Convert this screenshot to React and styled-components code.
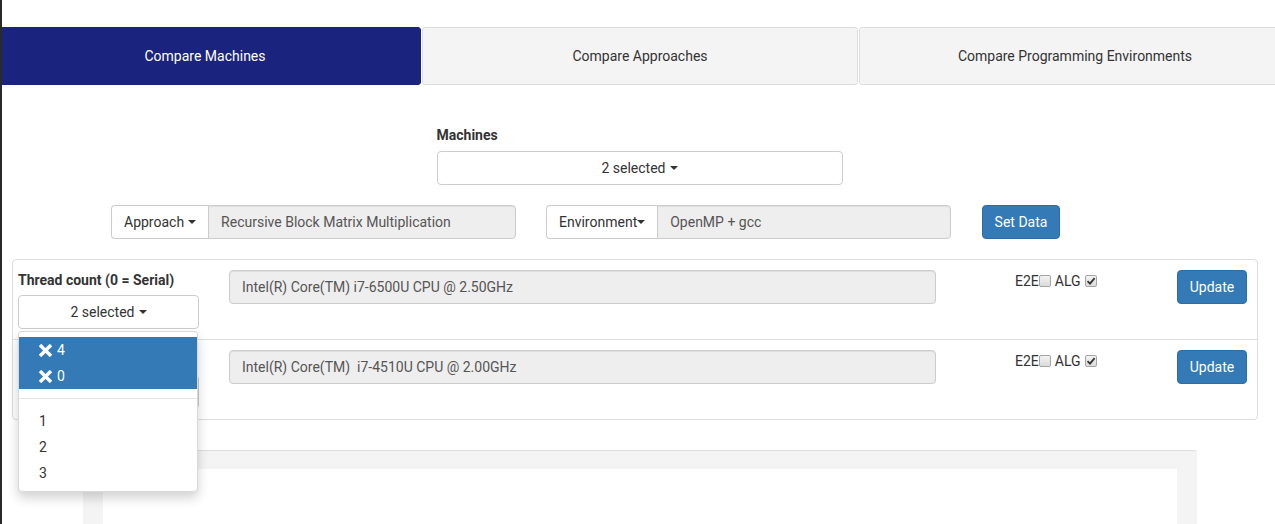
import React from "react";
import styled, { createGlobalStyle } from "styled-components";

const GlobalStyle = createGlobalStyle`
  * { box-sizing: border-box; }
  html, body { margin: 0; padding: 0; height: 100%; }
  body {
    border-left: 2px solid #2a2a2a;
    font-family: Roboto, "Liberation Sans", Arial, sans-serif;
    font-size: 14px;
    line-height: 20px;
    color: #333;
    background: #fff;
    overflow: hidden;
  }
`;

const Page = styled.div`
  padding-top: 27px;
  overflow: hidden;
  height: 100%;
`;

const Tabs = styled.div`
  display: flex;
  height: 58px;
  margin: 0 -16px 0 -13px;
`;

const Tab = styled.div`
  flex: 0 0 ${(p) => p.$w}px;
  margin-right: 1px;
  display: flex;
  align-items: center;
  justify-content: center;
  border: 1px solid ${(p) => (p.$active ? "#1a237e" : "#dddddd")};
  border-radius: 3px;
  background: ${(p) => (p.$active ? "#1a237e" : "#f4f4f4")};
  color: ${(p) => (p.$active ? "#fff" : "#333")};
  &:last-child { margin-right: 0; flex: 1; }
`;

const MachinesBlock = styled.div`
  width: 406px;
  margin: 40px auto 0;
  position: relative;
  left: 1px;
`;

const Label = styled.div`
  font-weight: bold;
  margin-bottom: 6px;
`;

const Caret = styled.span`
  display: inline-block;
  width: 0;
  height: 0;
  margin-left: ${(p) => (p.$tight ? 0 : 4)}px;
  vertical-align: middle;
  border-top: 4px solid #333;
  border-left: 4px solid transparent;
  border-right: 4px solid transparent;
`;

const SelectButton = styled.div`
  height: 34px;
  width: 100%;
  border: 1px solid #ccc;
  border-radius: 4px;
  background: #fff;
  display: flex;
  align-items: center;
  justify-content: center;
`;

const DataRow = styled.div`
  display: flex;
  align-items: center;
  margin-top: 20px;
  padding-left: 109px;
`;

const InputGroup = styled.div`
  display: flex;
  width: 405px;
  height: 34px;
  margin-right: ${(p) => p.$mr}px;
`;

const AddonButton = styled.div`
  flex: 0 0 auto;
  display: flex;
  align-items: center;
  padding: 0 12px;
  border: 1px solid #ccc;
  border-right: none;
  border-radius: 4px 0 0 4px;
  background: #fff;
`;

const ReadOnly = styled.div`
  flex: 1;
  display: flex;
  align-items: center;
  padding: 0 12px;
  height: ${(p) => p.$h || 34}px;
  border: 1px solid #ccc;
  border-radius: ${(p) => (p.$grouped ? "0 4px 4px 0" : "4px")};
  background: #eee;
  color: #555;
  box-shadow: inset 0 1px 1px rgba(0, 0, 0, 0.075);
  white-space: pre;
`;

const PrimaryButton = styled.div`
  display: inline-flex;
  align-items: center;
  justify-content: center;
  height: 34px;
  width: ${(p) => p.$w}px;
  background: #337ab7;
  border: 1px solid #2e6da4;
  border-radius: 4px;
  color: #fff;
`;

const ListPanel = styled.div`
  margin: 20px 17px 0 10px;
  border: 1px solid #ddd;
  border-radius: 4px;
`;

const MachineRow = styled.div`
  position: relative;
  display: grid;
  grid-template-columns: 181px 707px 1fr auto;
  column-gap: 30px;
  height: ${(p) => (p.$first ? 79 : 80)}px;
  padding: 10px 10px 0 5px;
  border-top: ${(p) => (p.$first ? "none" : "1px solid #ddd")};
`;

const ThreadCol = styled.div`
  display: flex;
  flex-direction: column;
`;

const ThreadLabel = styled.div`
  font-weight: bold;
  margin-bottom: 5px;
`;

const Checks = styled.div`
  padding-left: 49px;
  margin-top: 1px;
  display: flex;
  align-items: flex-start;
`;

const CheckText = styled.span`
  margin-left: ${(p) => p.$ml || 0}px;
`;

const Box = styled.span`
  display: inline-flex;
  align-items: center;
  justify-content: center;
  width: 12px;
  height: 12px;
  margin: 4px 0 0 ${(p) => p.$ml || 0}px;
  border: 1px solid #a5a5a5;
  border-radius: 2px;
  background: linear-gradient(#f2f2f2, #dcdcdc);
`;

const DropMenu = styled.div`
  position: absolute;
  top: 71px;
  left: 5px;
  width: 180px;
  z-index: 10;
  padding: 5px 0;
  background: #fff;
  border: 1px solid rgba(0, 0, 0, 0.15);
  border-radius: 4px;
  box-shadow: 0 6px 12px rgba(0, 0, 0, 0.175);
`;

const MenuItem = styled.div`
  height: 26px;
  padding: 3px 20px;
  display: flex;
  align-items: center;
  background: ${(p) => (p.$sel ? "#337ab7" : "transparent")};
  color: ${(p) => (p.$sel ? "#fff" : "#333")};
`;

const Divider = styled.div`
  height: 1px;
  margin: 9px 0;
  background: #e5e5e5;
`;

const ChartPanel = styled.div`
  width: 1114px;
  height: 120px;
  margin: 30px auto 0;
  position: relative;
  left: 1px;
  padding: 18px 20px 0;
  background: #f4f4f4;
  border-top: 1px solid #ddd;
  border-radius: 3px 3px 0 0;
`;

const ChartInner = styled.div`
  height: 100%;
  background: #fff;
`;

const XIcon = () => (
  <svg width="13" height="13" viewBox="0 0 13 13" style={{ marginRight: 5 }}>
    <path d="M2.2 2.2 L10.8 10.8 M10.8 2.2 L2.2 10.8" stroke="#fff" strokeWidth="3.4" strokeLinecap="square" />
  </svg>
);

const Check = () => (
  <svg width="10" height="10" viewBox="0 0 10 10">
    <path d="M1.5 5.2 L4 7.6 L8.6 2.2" stroke="#333" strokeWidth="1.8" fill="none" />
  </svg>
);

const machines = [
  "Intel(R) Core(TM) i7-6500U CPU @ 2.50GHz",
  "Intel(R) Core(TM)  i7-4510U CPU @ 2.00GHz",
];

export default function App() {
  return (
    <Page>
      <GlobalStyle />
      <Tabs>
        <Tab $active $w={432}>Compare Machines</Tab>
        <Tab $w={436}>Compare Approaches</Tab>
        <Tab>Compare Programming Environments</Tab>
      </Tabs>

      <MachinesBlock>
        <Label>Machines</Label>
        <SelectButton>
          2 selected <Caret />
        </SelectButton>
      </MachinesBlock>

      <DataRow>
        <InputGroup $mr={30}>
          <AddonButton>
            Approach <Caret />
          </AddonButton>
          <ReadOnly $grouped>Recursive Block Matrix Multiplication</ReadOnly>
        </InputGroup>
        <InputGroup $mr={31}>
          <AddonButton>
            Environment<Caret $tight />
          </AddonButton>
          <ReadOnly $grouped>OpenMP + gcc</ReadOnly>
        </InputGroup>
        <PrimaryButton $w={78}>Set Data</PrimaryButton>
      </DataRow>

      <ListPanel>
        {machines.map((m, i) => (
          <MachineRow key={m} $first={i === 0}>
            <ThreadCol>
              <ThreadLabel>Thread count (0 = Serial)</ThreadLabel>
              <SelectButton>
                2 selected <Caret />
              </SelectButton>
            </ThreadCol>
            <ReadOnly $h={34}>{m}</ReadOnly>
            <Checks>
              <CheckText>E2E</CheckText>
              <Box />
              <CheckText $ml={4}>ALG</CheckText>
              <Box $ml={4}>
                <Check />
              </Box>
            </Checks>
            <PrimaryButton $w={70}>Update</PrimaryButton>
            {i === 0 && (
              <DropMenu>
                <MenuItem $sel>
                  <XIcon />4
                </MenuItem>
                <MenuItem $sel>
                  <XIcon />0
                </MenuItem>
                <Divider />
                <MenuItem>1</MenuItem>
                <MenuItem>2</MenuItem>
                <MenuItem>3</MenuItem>
              </DropMenu>
            )}
          </MachineRow>
        ))}
      </ListPanel>

      <ChartPanel>
        <ChartInner />
      </ChartPanel>
    </Page>
  );
}
